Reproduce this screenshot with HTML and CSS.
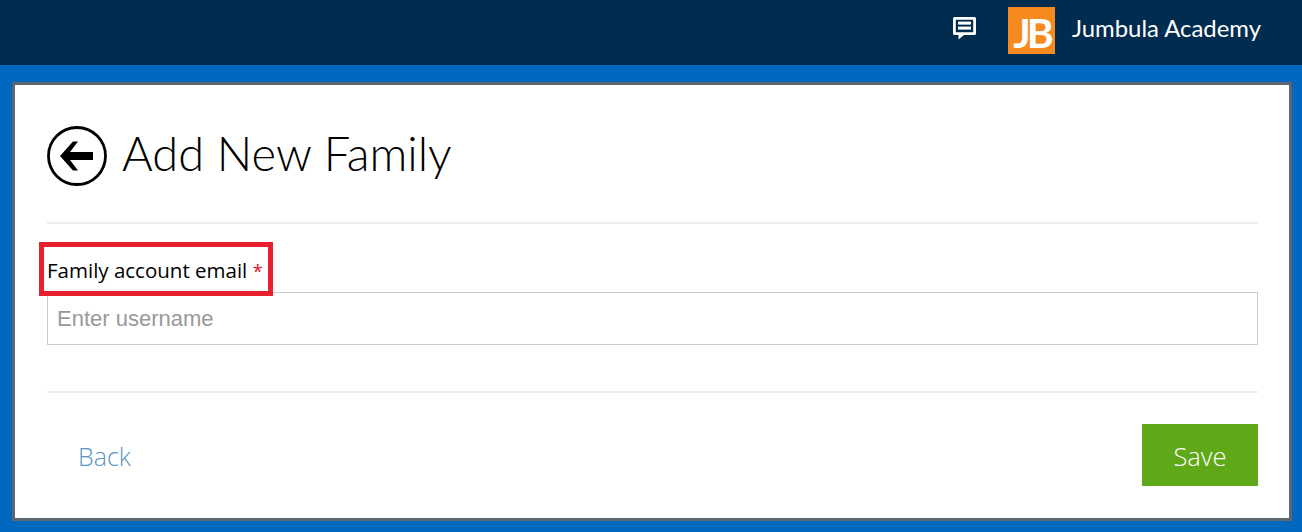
FILE: index.html
```html
<!DOCTYPE html>
<html lang="en">
<head>
    <meta charset="UTF-8">
    <title>Add New Family</title>
    <link rel="stylesheet" href="styles.css">
</head>
<body>
    <header class="topbar">
        <svg class="chat-icon" viewBox="0 0 23 23" width="23" height="23">
            <path fill="#fff" fill-rule="evenodd" d="M1.500 0h20A1.500 1.500 0 0 1 23 1.500v15a1.500 1.500 0 0 1-1.500 1.500H11l-5.500 4.500V18h-4A1.500 1.500 0 0 1 0 16.500v-15A1.500 1.500 0 0 1 1.500 0zM2.800 2.800v12.400h17.400V2.800z"/>
            <rect fill="#fff" x="5" y="4.600" width="13" height="3"/>
            <rect fill="#fff" x="5" y="9.600" width="13" height="3"/>
        </svg>
        <div class="logo"><span>JB</span></div>
        <span class="academy">Jumbula Academy</span>
    </header>

    <main class="card">
        <div class="title-row">
            <svg class="back-icon" viewBox="0 0 60 60" width="60" height="60">
                <circle cx="30" cy="30" r="28.500" fill="none" stroke="#000" stroke-width="2.800"/>
                <path fill="#000" d="M13 30 L26 15.500 L31 15.500 L23 26 H46 V34 H23 L31 44.500 L26 44.500 Z"/>
            </svg>
            <h1>Add New Family</h1>
        </div>

        <form class="family-form">
            <label class="email-label" for="email">Family account email <span class="req">*</span></label>
            <input class="email-input" id="email" type="text" placeholder="Enter username">
        </form>

        <div class="actions">
            <a class="back-link">Back</a>
            <button class="save-btn" type="button">Save</button>
        </div>
    </main>
</body>
</html>
```

FILE: styles.css
```css
body {
    margin: 0;
    height: 532px;
    overflow: hidden;
    background-color: #0069bf;
    font-family: "Open Sans", "Liberation Sans", sans-serif;
    color: #000;
}

.topbar {
    display: flex;
    align-items: center;
    justify-content: flex-end;
    height: 65px;
    padding-right: 41px;
    background-color: #002c50;
    color: #fff;
}

.chat-icon {
    margin-right: 32px;
    margin-top: -9px;
}

.logo {
    display: flex;
    align-items: center;
    justify-content: center;
    width: 47px;
    height: 47px;
    margin-right: 17px;
    margin-top: -4px;
    background-color: #f68a1e;
}

.logo span {
    margin-top: 4px;
    color: #fff;
    font-family: "Lato", sans-serif;
    font-weight: 700;
    font-size: 41px;
    letter-spacing: -4px;
}

.academy {
    margin-top: -11px;
    font-family: "Lato", sans-serif;
    font-size: 23.900px;
    font-weight: 400;
}

.card {
    margin: 17px 10px 0 12px;
    height: 433px;
    padding: 0 31px 0 32px;
    border: 3px solid #5d6770;
    background-color: #fff;
}

.title-row {
    display: flex;
    align-items: center;
    gap: 15px;
    height: 139px;
    padding-top: 6px;
    box-sizing: border-box;
    border-bottom: 2px solid #eee;
}

.back-icon {
    margin-top: -1px;
}

h1 {
    margin: 0 0 7px;
    font-family: "Lato", sans-serif;
    font-size: 47px;
    font-weight: 300;
}

.family-form {
    height: 169px;
    padding-top: 18px;
    box-sizing: border-box;
    border-bottom: 2px solid #eee;
}

.email-label {
    display: block;
    position: relative;
    width: max-content;
    margin: 0 0 -4px -8px;
    padding: 11px 5px 8px 3px;
    border: 5px solid #e81f2d;
    font-size: 20.500px;
    line-height: 24px;
}

.req {
    color: #d2232f;
    font-size: 19px;
}

.email-input {
    display: block;
    width: 100%;
    height: 53px;
    box-sizing: border-box;
    padding: 0 9px;
    border: 1px solid #ccc;
    font-family: "Liberation Sans", sans-serif;
    font-size: 22px;
}

.email-input::placeholder {
    color: #999;
}

.actions {
    display: flex;
    align-items: center;
    justify-content: space-between;
    padding-top: 31px;
}

.back-link {
    margin-left: 31px;
    margin-top: 2px;
    color: #5b93c4;
    font-size: 25px;
    font-weight: 300;
}

.save-btn {
    width: 116px;
    height: 62px;
    padding-top: 3px;
    border: 0;
    background-color: #5fa817;
    color: #fff;
    font-family: "Open Sans", sans-serif;
    font-size: 25.500px;
    font-weight: 300;
}
```
